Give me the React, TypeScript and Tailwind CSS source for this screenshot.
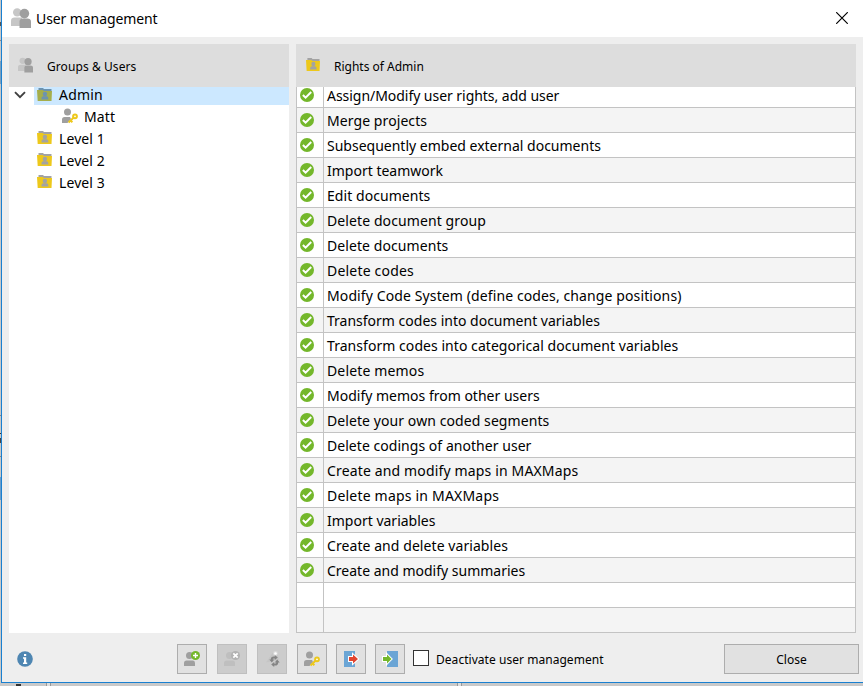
import React from "react";

const rights: { text: string; spacing?: string }[] = [
  { text: "Assign/Modify user rights, add user", spacing: "tracking-[-0.04px]" },
  { text: "Merge projects", spacing: "tracking-[0.08px]" },
  { text: "Subsequently embed external documents" },
  { text: "Import teamwork" },
  { text: "Edit documents", spacing: "tracking-[0.06px]" },
  { text: "Delete document group", spacing: "tracking-[0.1px]" },
  { text: "Delete documents", spacing: "tracking-[0.08px]" },
  { text: "Delete codes", spacing: "tracking-[0.2px]" },
  { text: "Modify Code System (define codes, change positions)", spacing: "tracking-[0.11px]" },
  { text: "Transform codes into document variables" },
  { text: "Transform codes into categorical document variables", spacing: "tracking-[0.05px]" },
  { text: "Delete memos", spacing: "tracking-[0.15px]" },
  { text: "Modify memos from other users" },
  { text: "Delete your own coded segments", spacing: "tracking-[0.08px]" },
  { text: "Delete codings of another user", spacing: "tracking-[0.04px]" },
  { text: "Create and modify maps in MAXMaps", spacing: "tracking-[0.15px]" },
  { text: "Delete maps in MAXMaps", spacing: "tracking-[0.2px]" },
  { text: "Import variables" },
  { text: "Create and delete variables", spacing: "tracking-[0.07px]" },
  { text: "Create and modify summaries" },
  { text: "" },
  { text: "" },
];

function People({ className }: { className: string }) {
  return (
    <svg viewBox="0 0 20 20" className={className}>
      <g fill="#c6c6c6">
        <circle cx="6.2" cy="4.4" r="4.2" />
        <path d="M0 18v-5.5C0 10.500 1.500 9.500 3.500 9.500H11V18z" />
      </g>
      <g fill="#9f9f9f">
        <circle cx="13.400" cy="5.600" r="4.800" />
        <path d="M8.500 20v-6.500c0-2 1.500-3 3.500-3h4.500c2 0 3.500 1 3.500 3V20z" />
      </g>
    </svg>
  );
}

function Folder({ selected = false, className = "mb-[2px] h-[13px] w-[15px]" }: { selected?: boolean; className?: string }) {
  const back = selected ? "#6c93b0" : "#a3a3a3";
  return (
    <svg viewBox="0 0 15 13" preserveAspectRatio="none" className={className}>
      <path d="M1.500 3V0H6L7 1h7.500v2z" fill={back} />
      <path d="M0 2h5.500l1.500 1H15l-.5 10H.7z" fill={selected ? "#a5ae4b" : "#edc81b"} />
      <circle cx="7.900" cy="6" r="2.200" fill={back} />
      <path d="M4.500 11.500V10q0-1.700 1.800-1.700h3.200q1.800 0 1.800 1.700v1.500z" fill={back} />
    </svg>
  );
}

function UserKey() {
  return (
    <svg viewBox="0 0 16 16" className="h-4 w-4">
      <circle cx="5.500" cy="4" r="3.500" fill="#9f9f9f" />
      <path d="M0 15v-3.500q0-2.500 2.500-2.500H8l1 2-3.500 4z" fill="#9f9f9f" />
      <path d="m6.500 14.500 5.500-5.200M8.800 12.700l1.600 1.500" stroke="#edc81b" strokeWidth="1.900" fill="none" />
      <circle cx="13" cy="8.300" r="1.900" stroke="#edc81b" strokeWidth="2" fill="#fff" />
    </svg>
  );
}

function Check() {
  return (
    <svg viewBox="0 0 14 14" className="h-[14px] w-[14px]">
      <circle cx="7" cy="7" r="7" fill="#74b72b" />
      <path d="m2.900 7 2.700 2.700 5.600-5.700" fill="none" stroke="#fff" strokeWidth="2" />
    </svg>
  );
}

function ToolButton({ disabled = false, className = "", children }: { disabled?: boolean; className?: string; children: React.ReactNode }) {
  return (
    <button
      className={`flex h-[30px] w-[30px] shrink-0 items-center justify-center border ${disabled ? "border-[#bfbfbf] bg-[#cccccc]" : "border-[#adadad] bg-[#e1e1e1]"} ${className}`}
    >
      {children}
    </button>
  );
}

function AddUser({ disabled = false }: { disabled?: boolean }) {
  const body = disabled ? "#bfbfbf" : "#9f9f9f";
  return (
    <svg viewBox="0 0 16 16" className="h-4 w-4">
      <circle cx="5.500" cy="4.500" r="3.500" fill={body} />
      <path d="M0 15v-3q0-2.500 2.500-2.500H9q2 0 2 2.500v3z" fill={body} />
      <circle cx="11.500" cy="4.500" r="4.500" fill={disabled ? "#b2b2b2" : "#74b72b"} />
      {disabled ? (
        <path d="m9.300 2.300 4.400 4.400m0-4.400L9.300 6.700" stroke="#fff" strokeWidth="1.700" />
      ) : (
        <path d="M11.500 2v5M9 4.500h5" stroke="#fff" strokeWidth="1.400" />
      )}
    </svg>
  );
}

function Swap() {
  return (
    <svg viewBox="0 0 16 16" className="h-4 w-4">
      <path d="M2 11.500 8.500 2h5L15 9z" fill="#c5c5c5" />
      <circle cx="11.500" cy="2.500" r="2.400" fill="#dadada" />
      <circle cx="11.500" cy="2.500" r="1.300" fill="#fff" />
      <path d="M7.800 9.500V8.300q0-1.800 2-1.800h1.400M13.200 10.500v1.200q0 1.800-2 1.800H9.800" fill="none" stroke="#858585" strokeWidth="2" />
      <path d="M10.800 4 13.800 6.500 10.800 9zM10.200 11 7.200 13.500l3 2.500zM5.300 8.500h5L7.800 11.500zM10.700 11.500h5l-2.500-3z" fill="#858585" />
    </svg>
  );
}

function ExportIcon() {
  return (
    <svg viewBox="0 0 16 16" className="h-4 w-4">
      <path d="M1 0h11v16H1z" fill="#6ba5d5" />
      <path d="M6 6h4V3.500L15 8l-5 4.500V10H6z" fill="#e2452f" stroke="#fff" strokeWidth="2" paintOrder="stroke" />
    </svg>
  );
}

function ImportIcon() {
  return (
    <svg viewBox="0 0 16 16" className="h-4 w-4">
      <path d="M5 0h11v16H5z" fill="#6ba5d5" />
      <path d="M1 6h4V3.500L9.500 8 5 12.500V10H1z" fill="#74b72b" stroke="#fff" strokeWidth="2" paintOrder="stroke" />
    </svg>
  );
}

export default function App() {
  return (
    <div className="flex h-[686px] w-[863px] flex-col overflow-hidden bg-[#c9c9c9] font-['Noto_Sans',sans-serif] text-black">
      <div className="flex h-[683px]">
        <div className="flex w-px shrink-0 flex-col bg-[#c9c9c9]">
          <div className="mt-[22px] h-[4px] bg-[#555]" />
          <div className="mt-[14px] h-px bg-[#888]" />
          <div className="mt-[20px] h-[23px] bg-[#7a9fbe]" />
          <div className="mt-[331px] h-px bg-[#888]" />
          <div className="mt-[17px] h-px bg-[#333]" />
          <div className="mt-[4px] h-[5px] bg-[#444]" />
          <div className="mt-[13px] h-px bg-[#888]" />
          <div className="mt-[20px] h-[23px] bg-[#6c9ecb]" />
        </div>
        <main className="flex w-[862px] flex-col border-b border-l border-[#1a80d0] bg-[#eeeeee]">
          <header className="flex h-[37px] shrink-0 items-center bg-white pl-[9px]">
            <People className="mb-px h-5 w-5" />
            <h1 className="ml-[5px] text-[14px] leading-[20px] tracking-[-0.09px]">User management</h1>
            <svg viewBox="0 0 12 12" className="mr-[15px] mb-px ml-auto h-3 w-3">
              <path d="m.2.2 11.600 11.600m0-11.600L.2 11.800" stroke="#000" strokeWidth="1.200" />
            </svg>
          </header>
          <div className="mt-[7px] flex h-[589px] shrink-0 gap-[7px] pl-[7px]">
            <section className="flex w-[280px] flex-col bg-white">
              <div className="flex h-[43px] items-center bg-[#dddddd] pl-[9px]">
                <People className="mb-px h-4 w-[15px]" />
                <h2 className="ml-[14px] pt-[2px] text-[12px] tracking-[0.08px]">Groups &amp; Users</h2>
              </div>
              <div className="flex h-[18px]">
                <div className="flex w-[25px] items-center justify-center pb-[3px]">
                  <svg viewBox="0 0 12 8" className="ml-[-3px] h-2 w-3">
                    <path d="m1 1.200 5 5 5-5" fill="none" stroke="#404040" strokeWidth="1.900" />
                  </svg>
                </div>
                <div className="flex grow items-center bg-[#cce8ff] pb-[2px] pl-[3px]">
                  <Folder selected className="mb-[2px] h-[13px] w-[15px]" />
                  <span className="ml-[7px] text-[14px] leading-[16px] tracking-[0.2px]">Admin</span>
                </div>
              </div>
              <div className="flex h-[22px] items-center pl-[53px]">
                <UserKey />
                <span className="ml-[6px] text-[14px] tracking-[0.1px]">Matt</span>
              </div>
              {["Level 1", "Level 2", "Level 3"].map((t) => (
                <div key={t} className="flex h-[22px] items-center pl-[28px]">
                  <Folder />
                  <span className="ml-[7px] text-[14px] tracking-[0.1px]">{t}</span>
                </div>
              ))}
            </section>
            <section className="w-[560px]">
              <div className="flex h-[43px] items-center bg-[#dddddd] pl-[10px]">
                <Folder className="mb-[3px] h-[13px] w-[14px]" />
                <h2 className="ml-[14px] pt-[2px] text-[12px]">Rights of Admin</h2>
              </div>
              <div className="flex h-[546px] flex-col border-x border-[#c3c3c3]">
                {rights.map((r, i) => (
                  <div
                    key={i}
                    className={`flex shrink-0 border-b border-[#c3c3c3] ${i === 0 ? "h-[21px]" : "h-[25px]"} ${i % 2 ? "bg-[#f4f4f4]" : "bg-white"}`}
                  >
                    <div className={`flex w-[27px] border-r border-[#c3c3c3] pl-[3px] ${i === 0 ? "pt-px" : "pt-[5px]"}`}>
                      {r.text && <Check />}
                    </div>
                    <div className={`pl-[3px] text-[14px] whitespace-nowrap ${i === 0 ? "leading-[17px]" : "pt-px leading-[24px]"} ${r.spacing ?? ""}`}>
                      {r.text}
                    </div>
                  </div>
                ))}
              </div>
            </section>
          </div>
          <footer className="flex h-[49px] items-center pt-[2px] pr-[4px] pl-[15px]">
            <svg viewBox="0 0 16 16" className="h-4 w-4">
              <circle cx="8" cy="8" r="7.800" fill="#4e86b2" />
              <path d="M7 3h2.200v2H7zM6 6.300h3.200v5.200h1V13H6v-1.500h1V7.700H6z" fill="#fff" />
            </svg>
            <div className="ml-[144px] flex">
              <ToolButton className="mr-[10px]"><AddUser /></ToolButton>
              <ToolButton disabled className="mr-[10px]"><AddUser disabled /></ToolButton>
              <ToolButton disabled className="mr-[10px]"><Swap /></ToolButton>
              <ToolButton className="mr-[9px]"><UserKey /></ToolButton>
              <ToolButton className="mr-[9px]"><ExportIcon /></ToolButton>
              <ToolButton><ImportIcon /></ToolButton>
            </div>
            <div className="mb-[2px] ml-[8px] h-4 w-4 border border-[#333] bg-white" />
            <span className="ml-[7px] pt-[2px] text-[12px] tracking-[0.04px]">Deactivate user management</span>
            <button className="ml-auto h-[30px] w-[135px] border border-[#adadad] bg-[#e1e1e1] pt-[2px] text-[12px]">Close</button>
          </footer>
        </main>
      </div>
      <div className="flex h-[3px] bg-[#c9c9c9]">
        <div className="mt-px ml-4 h-[2px] w-[5px] bg-[#333]" />
        <div className="ml-[25px] h-[3px] w-[5px] border-x border-[#999] bg-[#ddd]" />
        <div className="ml-[406px] h-[3px] w-[5px] border-x border-[#999] bg-[#ddd]" />
      </div>
    </div>
  );
}
